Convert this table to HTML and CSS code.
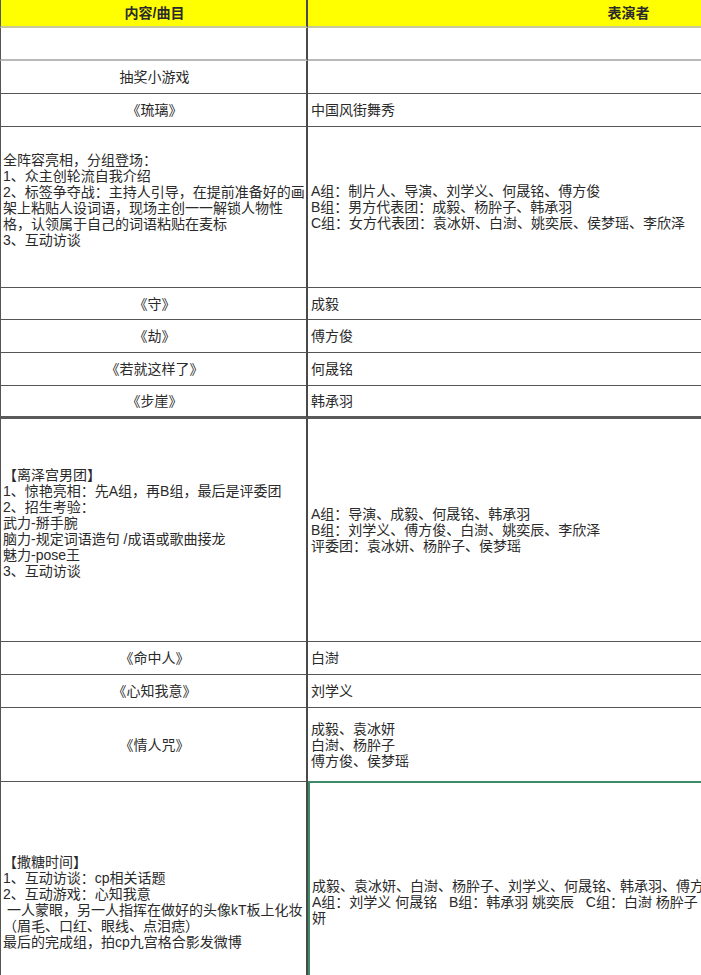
FILE: index.html
```html
<!DOCTYPE html>
<html lang="zh-CN">
<head>
<meta charset="utf-8">
<title>节目单</title>
<link rel="stylesheet" href="styles.css">
</head>
<body>
<div class="sheet">
  <div class="cell head left">内容/曲目</div>
  <div class="cell head right">表演者</div>

  <div class="cell left light"></div>
  <div class="cell right light"></div>

  <div class="cell left center">抽奖小游戏</div>
  <div class="cell right"></div>

  <div class="cell left center">《琉璃》</div>
  <div class="cell right">中国风街舞秀</div>

  <div class="cell left shift">全阵容亮相，分组登场：<br>1、众主创轮流自我介绍<br>2、标签争夺战：主持人引导，在提前准备好的画<br>架上粘贴人设词语，现场主创一一解锁人物性<br>格，认领属于自己的词语粘贴在麦标<br>3、互动访谈</div>
  <div class="cell right">A组：制片人、导演、刘学义、何晟铭、傅方俊<br>B组：男方代表团：成毅、杨肸子、韩承羽<br>C组：女方代表团：袁冰妍、白澍、姚奕辰、侯梦瑶、李欣泽</div>

  <div class="cell left center">《守》</div>
  <div class="cell right">成毅</div>

  <div class="cell left center">《劫》</div>
  <div class="cell right">傅方俊</div>

  <div class="cell left center">《若就这样了》</div>
  <div class="cell right">何晟铭</div>

  <div class="cell left center thick">《步崖》</div>
  <div class="cell right thick">韩承羽</div>

  <div class="cell left shift">【离泽宫男团】<br>1、惊艳亮相：先A组，再B组，最后是评委团<br>2、招生考验：<br>武力-掰手腕<br>脑力-规定词语造句 /成语或歌曲接龙<br>魅力-pose王<br>3、互动访谈</div>
  <div class="cell right">A组：导演、成毅、何晟铭、韩承羽<br>B组：刘学义、傅方俊、白澍、姚奕辰、李欣泽<br>评委团：袁冰妍、杨肸子、侯梦瑶</div>

  <div class="cell left center">《命中人》</div>
  <div class="cell right">白澍</div>

  <div class="cell left center">《心知我意》</div>
  <div class="cell right">刘学义</div>

  <div class="cell left center">《情人咒》</div>
  <div class="cell right">成毅、袁冰妍<br>白澍、杨肸子<br>傅方俊、侯梦瑶</div>

  <div class="cell left">【撒糖时间】<br>1、互动访谈：cp相关话题<br>2、互动游戏：心知我意<br>&nbsp;一人蒙眼，另一人指挥在做好的头像kT板上化妆<br>（眉毛、口红、眼线、点泪痣）<br>最后的完成组，拍cp九宫格合影发微博</div>
  <div class="cell right selected">成毅、袁冰妍、白澍、杨肸子、刘学义、何晟铭、韩承羽、傅方俊、姚奕辰、侯梦瑶<br>A组：刘学义 何晟铭&nbsp;&nbsp;&nbsp;B组：韩承羽 姚奕辰&nbsp;&nbsp;&nbsp;C组：白澍 杨肸子&nbsp;&nbsp;&nbsp;D组：傅方俊 袁冰<br>妍</div>
</div>
</body>
</html>
```

FILE: styles.css
```css
* {
  box-sizing: border-box;
}

html, body {
  margin: 0;
  padding: 0;
  background: #ffffff;
  overflow: hidden;
}

body {
  width: 701px;
  height: 975px;
  font-family: "Liberation Sans", "Noto Sans CJK SC", sans-serif;
  font-size: 14px;
  line-height: 16px;
  color: #2a2a2a;
}

.sheet {
  display: grid;
  width: 946px;
  grid-template-columns: 308px 638px;
  grid-template-rows: 28px 33px 33px 33px 161px 32px 33px 33px 33px 223px 33px 33px 74px 240px;
}

.cell {
  display: flex;
  align-items: center;
  border-bottom: 1px solid #555555;
  white-space: nowrap;
  overflow: hidden;
}

.left {
  border-left: 1px solid #555555;
  border-right: 2px solid #4a4a4a;
  padding-left: 2px;
}

.right {
  padding-left: 3px;
}

.center {
  justify-content: center;
}

.head {
  background: #ffff00;
  font-weight: bold;
  justify-content: center;
  border-bottom: 2px solid #c8c8a0;
  font-size: 14px;
}

.light {
  border-bottom: 2px solid #b9b9b9;
}

.thick {
  border-bottom: 3px solid #5a5a5a;
}

.shift {
  padding-bottom: 14px;
}

.selected {
  border-top: 2px solid #3d8c68;
  border-left: 2px solid #3d8c68;
  margin-top: -1px;
  padding-left: 2px;
}
```
